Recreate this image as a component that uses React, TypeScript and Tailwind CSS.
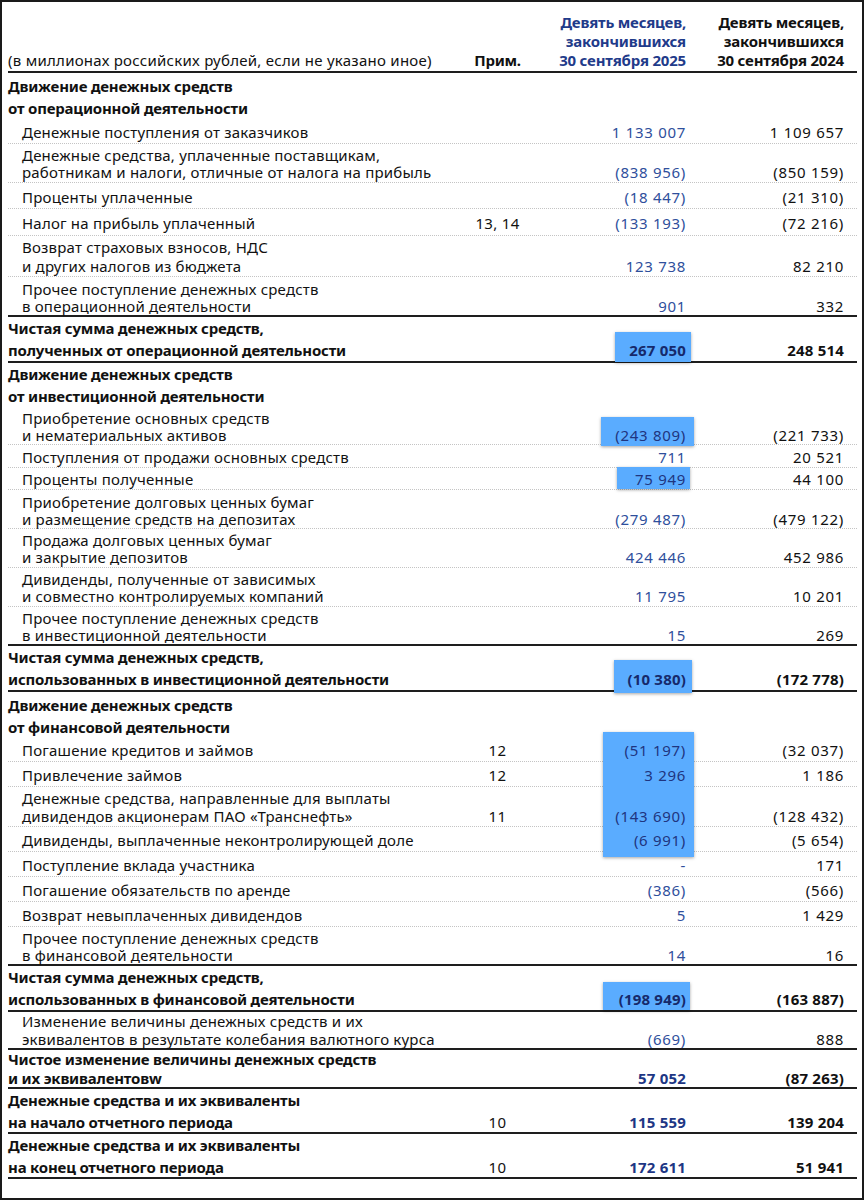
import React from "react";

type Row = {
  lines: string[];
  note?: string;
  a?: string;
  b?: string;
  kind: "sec" | "item" | "total" | "fx";
  h: string;
  lh: string;
  pb: string;
  border: "dot" | "solid" | "none";
  hi?: boolean;
};

const rows: Row[] = [
  { kind: "sec", lines: ["Движение денежных средств", "от операционной деятельности"], h: "h-[46px]", lh: "leading-[22px]", pb: "pb-0", border: "none" },
  { kind: "item", lines: ["Денежные поступления от заказчиков"], a: "1 133 007", b: "1 109 657", h: "h-[25px]", lh: "leading-[20px]", pb: "pb-[1px]", border: "dot" },
  { kind: "item", lines: ["Денежные средства, уплаченные поставщикам,", "работникам и налоги, отличные от налога на прибыль"], a: "(838 956)", b: "(850 159)", h: "h-[39px]", lh: "leading-[17px]", pb: "pb-[1px]", border: "dot" },
  { kind: "item", lines: ["Проценты уплаченные"], a: "(18 447)", b: "(21 310)", h: "h-[26px]", lh: "leading-[20px]", pb: "pb-[1px]", border: "dot" },
  { kind: "item", lines: ["Налог на прибыль уплаченный"], note: "13, 14", a: "(133 193)", b: "(72 216)", h: "h-[27px]", lh: "leading-[20px]", pb: "pb-[2px]", border: "dot" },
  { kind: "item", lines: ["Возврат страховых взносов, НДС", "и других налогов из бюджета"], a: "123 738", b: "82 210", h: "h-[41px]", lh: "leading-[19px]", pb: "pb-0", border: "dot" },
  { kind: "item", lines: ["Прочее поступление денежных средств", "в операционной деятельности"], a: "901", b: "332", h: "h-[40px]", lh: "leading-[17px]", pb: "pb-0", border: "solid" },
  { kind: "total", lines: ["Чистая сумма денежных средств,", "полученных от операционной деятельности"], a: "267 050", b: "248 514", h: "h-[46px]", lh: "leading-[22px]", pb: "pb-0", border: "solid", hi: true },
  { kind: "sec", lines: ["Движение денежных средств", "от инвестиционной деятельности"], h: "h-[44px]", lh: "leading-[22px]", pb: "pb-0", border: "none" },
  { kind: "item", lines: ["Приобретение основных средств", "и нематериальных активов"], a: "(243 809)", b: "(221 733)", h: "h-[38px]", lh: "leading-[17px]", pb: "pb-0", border: "dot", hi: true },
  { kind: "item", lines: ["Поступления от продажи основных средств"], a: "711", b: "20 521", h: "h-[23px]", lh: "leading-[20px]", pb: "pb-0", border: "dot" },
  { kind: "item", lines: ["Проценты полученные"], a: "75 949", b: "44 100", h: "h-[22px]", lh: "leading-[20px]", pb: "pb-0", border: "dot", hi: true },
  { kind: "item", lines: ["Приобретение долговых ценных бумаг", "и размещение средств на депозитах"], a: "(279 487)", b: "(479 122)", h: "h-[39px]", lh: "leading-[17px]", pb: "pb-0", border: "dot" },
  { kind: "item", lines: ["Продажа долговых ценных бумаг", "и закрытие депозитов"], a: "424 446", b: "452 986", h: "h-[39px]", lh: "leading-[17px]", pb: "pb-[1px]", border: "dot" },
  { kind: "item", lines: ["Дивиденды, полученные от зависимых", "и совместно контролируемых компаний"], a: "11 795", b: "10 201", h: "h-[39px]", lh: "leading-[17px]", pb: "pb-[1px]", border: "dot" },
  { kind: "item", lines: ["Прочее поступление денежных средств", "в инвестиционной деятельности"], a: "15", b: "269", h: "h-[39px]", lh: "leading-[17px]", pb: "pb-0", border: "solid" },
  { kind: "total", lines: ["Чистая сумма денежных средств,", "использованных в инвестиционной деятельности"], a: "(10 380)", b: "(172 778)", h: "h-[46px]", lh: "leading-[22px]", pb: "pb-0", border: "solid", hi: true },
  { kind: "sec", lines: ["Движение денежных средств", "от финансовой деятельности"], h: "h-[46px]", lh: "leading-[22px]", pb: "pb-0", border: "none" },
  { kind: "item", lines: ["Погашение кредитов и займов"], note: "12", a: "(51 197)", b: "(32 037)", h: "h-[24px]", lh: "leading-[20px]", pb: "pb-[1px]", border: "dot", hi: true },
  { kind: "item", lines: ["Привлечение займов"], note: "12", a: "3 296", b: "1 186", h: "h-[25px]", lh: "leading-[20px]", pb: "pb-[1px]", border: "dot", hi: true },
  { kind: "item", lines: ["Денежные средства, направленные для выплаты", "дивидендов акционерам ПАО «Транснефть»"], note: "11", a: "(143 690)", b: "(128 432)", h: "h-[40px]", lh: "leading-[18px]", pb: "pb-[1px]", border: "dot", hi: true },
  { kind: "item", lines: ["Дивиденды, выплаченные неконтролирующей доле"], a: "(6 991)", b: "(5 654)", h: "h-[25px]", lh: "leading-[20px]", pb: "pb-[1px]", border: "dot", hi: true },
  { kind: "item", lines: ["Поступление вклада участника"], a: "-", b: "171", h: "h-[25px]", lh: "leading-[20px]", pb: "pb-[1px]", border: "dot" },
  { kind: "item", lines: ["Погашение обязательств по аренде"], a: "(386)", b: "(566)", h: "h-[25px]", lh: "leading-[20px]", pb: "pb-[1px]", border: "dot" },
  { kind: "item", lines: ["Возврат невыплаченных дивидендов"], a: "5", b: "1 429", h: "h-[25px]", lh: "leading-[20px]", pb: "pb-[1px]", border: "dot" },
  { kind: "item", lines: ["Прочее поступление денежных средств", "в финансовой деятельности"], a: "14", b: "16", h: "h-[39px]", lh: "leading-[17px]", pb: "pb-0", border: "solid" },
  { kind: "total", lines: ["Чистая сумма денежных средств,", "использованных в финансовой деятельности"], a: "(198 949)", b: "(163 887)", h: "h-[46px]", lh: "leading-[22px]", pb: "pb-0", border: "solid", hi: true },
  { kind: "fx", lines: ["Изменение величины денежных средств и их", "эквивалентов в результате колебания валютного курса"], a: "(669)", b: "888", h: "h-[38px]", lh: "leading-[18px]", pb: "pb-0", border: "solid" },
  { kind: "total", lines: ["Чистое изменение величины денежных средств", "и их эквивалентовw"], a: "57 052", b: "(87 263)", h: "h-[39px]", lh: "leading-[19px]", pb: "pb-0", border: "solid" },
  { kind: "total", lines: ["Денежные средства и их эквиваленты", "на начало отчетного периода"], note: "10", a: "115 559", b: "139 204", h: "h-[45px]", lh: "leading-[22px]", pb: "pb-0", border: "solid" },
  { kind: "total", lines: ["Денежные средства и их эквиваленты", "на конец отчетного периода"], note: "10", a: "172 611", b: "51 941", h: "h-[45px]", lh: "leading-[22px]", pb: "pb-0", border: "solid" },
];

const borderCls = {
  dot: "border-b border-dotted border-[#c4c4c4]",
  solid: "border-b-2 border-[#1e1e1e]",
  none: "",
};

function TableRow({ r }: { r: Row }) {
  const bold = r.kind === "total" || r.kind === "sec";
  const indent = r.kind === "item" || r.kind === "fx";
  const aColor = r.hi
    ? bold
      ? "font-bold text-[#16296b] tracking-[0.2px]"
      : "text-[#1f3580] tracking-[0.7px]"
    : bold
      ? "font-bold text-[#1d3684] tracking-[0.2px]"
      : "text-[#2f4f9c] tracking-[0.7px]";
  return (
    <div
      className={`grid grid-cols-[1fr_75px_151px_158px] items-end pr-[13px] ${r.h} ${r.pb} ${r.lh} ${borderCls[r.border]}`}
    >
      <div
        className={`${indent ? "pl-[14px]" : ""} ${bold ? "font-bold tracking-[-0.2px]" : "tracking-[0.2px]"} whitespace-nowrap text-[#111]`}
      >
        {r.lines.map((l, i) => (
          <div key={i}>{l}</div>
        ))}
      </div>
      <div className="text-center text-[#111] tracking-[0.3px]">{r.note ?? ""}</div>
      <div className={`text-right ${aColor}`}>
        <span className="relative z-20">{r.a ?? ""}</span>
      </div>
      <div
        className={`text-right text-[#111] ${bold ? "font-bold tracking-[0.2px]" : "tracking-[0.7px]"}`}
      >
        {r.b ?? ""}
      </div>
    </div>
  );
}

const hl = "absolute z-10 bg-[#5aacff] shadow-[0_1px_3px_rgba(0,0,0,0.35)]";

export default function App() {
  return (
    <div
      className="relative w-[864px] h-[1200px] border-2 border-[#1a1a1a] bg-white pl-[6px] pr-[5px] text-[15px]"
      style={{ fontFamily: '"Noto Sans", "Open Sans", sans-serif' }}
    >
      <div className={`${hl} left-[613px] top-[330px] w-[76px] h-[30px]`} />
      <div className={`${hl} left-[599px] top-[415px] w-[93px] h-[29px]`} />
      <div className={`${hl} left-[615px] top-[465px] w-[73px] h-[22px]`} />
      <div className={`${hl} left-[612px] top-[658px] w-[78px] h-[33px]`} />
      <div className={`${hl} left-[601px] top-[730px] w-[91px] h-[125px]`} />
      <div className={`${hl} left-[601px] top-[980px] w-[87px] h-[28px]`} />

      <div className="grid grid-cols-[1fr_75px_151px_158px] items-end pr-[13px] h-[71px] border-b-2 border-[#1e1e1e] leading-[19px] pb-[1px]">
        <div className="text-[#111] whitespace-nowrap tracking-[0.26px]">
          (в миллионах российских рублей, если не указано иное)
        </div>
        <div className="text-center font-bold text-[#111] tracking-[-0.3px]">Прим.</div>
        <div className="text-right font-bold text-[#1f3b8a] whitespace-nowrap tracking-[-0.2px]">
          <div>Девять месяцев,</div>
          <div>закончившихся</div>
          <div>30 сентября 2025</div>
        </div>
        <div className="text-right font-bold text-[#111] whitespace-nowrap tracking-[-0.2px]">
          <div>Девять месяцев,</div>
          <div>закончившихся</div>
          <div>30 сентября 2024</div>
        </div>
      </div>
      {rows.map((r, i) => (
        <TableRow key={i} r={r} />
      ))}
    </div>
  );
}
